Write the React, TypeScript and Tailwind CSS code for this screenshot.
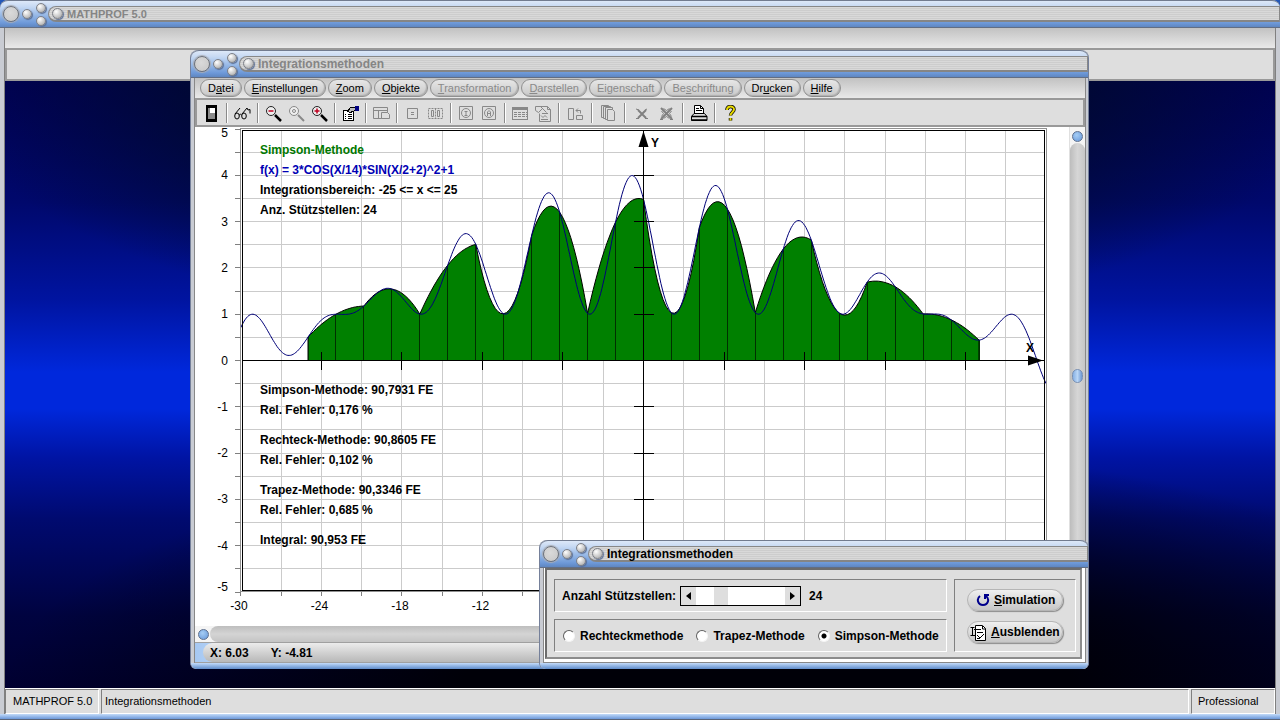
import React from 'react';

const f = (x: number) => 3 * Math.cos(x / 14) * Math.sin(x / 2 + 2) ** 2 + 1;

// plot coordinates -> svg coordinates
const px = (x: number) => 448.5 + x * 13.42;
const py = (y: number) => 233.5 - y * 46.3;

const FROM = -25;
const TO = 25;
const STEPS = 24;

const range = (from: number, to: number, step: number) => {
    const values: number[] = [];
    for (let v = from; v <= to + step / 100; v += step) values.push(v);
    return values;
};

const toPath = (points: number[][]) =>
    points.map(([x, y], i) => `${i ? 'L' : 'M'}${px(x).toFixed(1)} ${py(y).toFixed(1)}`).join('');

const simpsonPoints = () => {
    const h = (TO - FROM) / STEPS;
    const points: number[][] = [];
    for (let k = 0; k < STEPS; k += 2) {
        const x0 = FROM + k * h;
        const [a, b, c] = [f(x0), f(x0 + h), f(x0 + 2 * h)];
        for (let i = 0; i <= 20; i++) {
            const t = i / 10;
            const y = (a * (t - 1) * (t - 2)) / 2 - b * t * (t - 2) + (c * t * (t - 1)) / 2;
            points.push([x0 + t * h, y]);
        }
    }
    return points;
};

const curve = toPath(range(-30, 30, 0.1).map((x) => [x, f(x)]));
const area = toPath([[FROM, 0], ...simpsonPoints(), [TO, 0]]) + 'Z';
const nodes = range(FROM, TO, (TO - FROM) / STEPS);

const notes = [
    { y: 27, text: 'Simpson-Methode', color: '#007800' },
    { y: 47, text: 'f(x) = 3*COS(X/14)*SIN(X/2+2)^2+1', color: '#0000b4' },
    { y: 67, text: 'Integrationsbereich: -25 <= x <= 25', color: '#000' },
    { y: 87, text: 'Anz. Stützstellen: 24', color: '#000' },
    { y: 267, text: 'Simpson-Methode: 90,7931 FE', color: '#000' },
    { y: 287, text: 'Rel. Fehler: 0,176 %', color: '#000' },
    { y: 317, text: 'Rechteck-Methode: 90,8605 FE', color: '#000' },
    { y: 337, text: 'Rel. Fehler: 0,102 %', color: '#000' },
    { y: 367, text: 'Trapez-Methode: 90,3346 FE', color: '#000' },
    { y: 387, text: 'Rel. Fehler: 0,685 %', color: '#000' },
    { y: 417, text: 'Integral: 90,953 FE', color: '#000' },
];

const Chart: React.FC = () => (
    <svg viewBox="0 0 874 499" preserveAspectRatio="xMinYMin meet" className="block h-full w-full bg-white">
        <g stroke="#cbcbcb" shapeRendering="crispEdges">
            {range(-27, 27, 3).map((x) => (
                <path key={x} d={`M${px(x)} 4V463`} />
            ))}
            {range(-4.5, 4.5, 0.5).map((y) => (
                <path key={y} d={`M48 ${py(y)}H849`} />
            ))}
        </g>

        <path d={area} fill="#008000" stroke="#000" />
        <g stroke="#003000" shapeRendering="crispEdges">
            {nodes.map((x) => (
                <path key={x} d={`M${px(x)} ${py(f(x))}V${py(0)}`} />
            ))}
        </g>
        <path d={curve} fill="none" stroke="#000078" />

        {/* Axes */}
        <g stroke="#000" shapeRendering="crispEdges">
            <path d={`M48 ${py(0)}H849`} />
            <path d="M448.5 4V463" />
            {range(-24, 24, 6).map((x) => (
                <path key={x} d={`M${px(x)} 225v18`} />
            ))}
            {range(-4, 4, 1).map((y) => (
                <path key={y} d={`M439 ${py(y)}h20`} />
            ))}
        </g>
        <path d="M448.5 4l-5 16h10zM848 233.5l-15-5v10z" />

        {/* Frame and scale */}
        <g fill="none" shapeRendering="crispEdges">
            <rect x="45.5" y="1.5" width="806" height="463" stroke="#909090" />
            <rect x="47.5" y="3.5" width="802" height="460" stroke="#000" />
            {range(-5, 5, 0.5).map((y) => (
                <path key={y} d={`M40 ${py(y)}h6`} stroke="#808080" />
            ))}
            {range(-30, 30, 3).map((x) => (
                <path key={x} d={`M${px(x)} 465v4`} stroke="#808080" />
            ))}
        </g>
        <g className="text-[12px]" textAnchor="end">
            {range(-5, 5, 1).map((y) => (
                <text key={y} x="33" y={y === 5 ? 10 : y === -5 ? 464 : py(y) + 4}>{y}</text>
            ))}
        </g>
        <g className="text-[12px]" textAnchor="middle">
            {range(-30, -12, 6).map((x) => (
                <text key={x} x={px(x) - 2} y="483">{x}</text>
            ))}
        </g>

        <g className="text-[12px] font-bold">
            {notes.map((note) => (
                <text key={note.y} x="65" y={note.y} fill={note.color}>{note.text}</text>
            ))}
            <text x="456" y="20">Y</text>
            <text x="831" y="225">X</text>
        </g>
    </svg>
);

const knob =
    'block rounded-full border border-[#7d8088] bg-[radial-gradient(circle_at_35%_30%,#ffffff,#d4d4d4_45%,#a2a2a2)] shadow-[1px_1px_1px_#5a6f96]';

interface TitleBarProps {
    title: string;
    className: string;
}

const TitleBar: React.FC<TitleBarProps> = ({ title, className }) => (
    <div className="flex h-7 shrink-0 items-center rounded-t-lg border-t border-[#727c90] border-b border-b-[#626e84] bg-[linear-gradient(#dde8f8,#c6d9f3_22%,#9dbde8_50%,#6c98d8_85%,#5f86c0)] pl-[3px]">
        <button aria-label="Menü" className="block size-4 rounded-full border border-[#6e7178] bg-[radial-gradient(circle_at_45%_40%,#dadada,#c6c6c6)] shadow-[0_0_1px_1px_#a9adb5]" />
        <button aria-label="Minimieren" className={`ml-[3px] size-[10px] ${knob}`} />
        <div className="ml-1 flex flex-col gap-[3px]">
            <button aria-label="Maximieren" className={`size-[10px] ${knob}`} />
            <button aria-label="Wiederherstellen" className={`size-[10px] ${knob}`} />
        </div>
        <div className="ml-[2px] flex h-4 flex-1 items-center rounded-l-full rounded-r-sm border border-[#888] border-b-2 border-b-[#858585] bg-[repeating-linear-gradient(#d9d9d9_0px,#d9d9d9_1px,#cdcdcd_1px,#cdcdcd_2px)]">
            <button aria-label="Schließen" className={`ml-[3px] size-[11px] ${knob}`} />
            <span className={`ml-1 leading-[14px] font-bold ${className}`}>{title}</span>
        </div>
    </div>
);

interface MenuItem {
    label: string;
    key: number;
    disabled?: boolean;
}

const menu: MenuItem[] = [
    { label: 'Datei', key: 1 },
    { label: 'Einstellungen', key: 0 },
    { label: 'Zoom', key: 0 },
    { label: 'Objekte', key: 0 },
    { label: 'Transformation', key: 0, disabled: true },
    { label: 'Darstellen', key: 0, disabled: true },
    { label: 'Eigenschaft', key: 2, disabled: true },
    { label: 'Beschriftung', key: 2, disabled: true },
    { label: 'Drucken', key: 2 },
    { label: 'Hilfe', key: 0 },
];

const MenuBar: React.FC = () => (
    <nav className="flex h-5 shrink-0 items-center gap-[2px] bg-linear-to-b from-[#c2c2c2] to-[#e9e9e9] pl-[5px]">
        {menu.map(({ label, key, disabled }) => (
            <button
                key={label}
                disabled={disabled}
                className="h-[18px] rounded-full border border-[#909090] bg-linear-to-b from-[#e6e6e6] to-[#c9c9c9] px-[7px] text-[11px] leading-4 text-black shadow-[inset_-1px_-1px_1px_#b0b0b0] disabled:text-[#8a8a8a]"
            >
                {label.slice(0, key)}
                <u>{label[key]}</u>
                {label.slice(key + 1)}
            </button>
        ))}
    </nav>
);

interface Tool {
    name: string;
    icon: React.ReactNode;
}

const lens = <circle cx="6" cy="6" r="4.5" fill="#eee" />;

const toolGroups: { width: string; tools: Tool[] }[] = [
    {
        width: 'w-[23px]',
        tools: [
            {
                name: 'Beenden',
                icon: (
                    <g stroke="none">
                        <path d="M3 0h11v17H3z" fill="#000" />
                        <path d="M5 3h7v11H5z" fill="#8a8a8a" />
                        <path d="M7 3h5v5H7z" fill="#fff" />
                    </g>
                ),
            },
        ],
    },
    {
        width: 'w-[23px]',
        tools: [
            {
                name: 'Ansicht',
                icon: (
                    <g stroke="#000">
                        <ellipse cx="3" cy="11" rx="2.3" ry="3" />
                        <ellipse cx="10" cy="11" rx="2.3" ry="3" />
                        <path d="M1 9L6 3M5.2 10q1.300-1.500 2.500 0M8 9l5-6M13 3l1 2 2-.5v4" />
                    </g>
                ),
            },
        ],
    },
    {
        width: 'w-[23px]',
        tools: [
            {
                name: 'Verkleinern',
                icon: (
                    <g stroke="#222">
                        {lens}
                        <path d="M10 10l6 6" strokeWidth="2.500" stroke="#000" />
                        <path d="M3.500 6h5" stroke="#c00020" strokeWidth="1.500" />
                    </g>
                ),
            },
            {
                name: 'Originalgröße',
                icon: (
                    <g stroke="#888">
                        {lens}
                        <circle cx="6" cy="6" r="1.500" />
                        <path d="M10 10l6 6" strokeWidth="2" />
                    </g>
                ),
            },
            {
                name: 'Vergrößern',
                icon: (
                    <g stroke="#222">
                        {lens}
                        <path d="M10 10l6 6" strokeWidth="2.500" stroke="#000" />
                        <path d="M3.500 6h5M6 3.500v5" stroke="#c00020" strokeWidth="1.500" />
                    </g>
                ),
            },
        ],
    },
    {
        width: 'w-[23px]',
        tools: [
            {
                name: 'Eigenschaften',
                icon: (
                    <g stroke="#000" shapeRendering="crispEdges">
                        <path d="M1.500 5.500h10v10h-10z" fill="#fff" />
                        <path d="M3 9.500h1M6 9.500h4M3 11.500h1M6 11.500h4M3 13.500h1M6 13.500h4" />
                        <path d="M5.500 6.500l3-4h5v3l-3 1-2 1z" fill="#bbb" />
                        <path d="M13.500 1.500h3v4h-3z" fill="#000080" stroke="#000080" />
                    </g>
                ),
            },
        ],
    },
    {
        width: 'w-[23px]',
        tools: [
            {
                name: 'Fenster',
                icon: (
                    <g stroke="#888">
                        <path d="M.5 2.500h14v11H.5zM.5 5.500h14M5.500 5.500v8" />
                        <path d="M8.500 7.500h6l2 2v4h-8z" fill="#dedede" />
                    </g>
                ),
            },
        ],
    },
    {
        width: 'w-[23px]',
        tools: [
            { name: 'Punkt', icon: <path d="M3.500 3.500h10v10h-10zM7 7.500h3M7 9.500h3" stroke="#888" /> },
            {
                name: 'Punkte',
                icon: (
                    <g stroke="#888">
                        <path d="M1.500 3.500h14v10h-14zM8.500 3.500v10" strokeDasharray="2 1" />
                        <path d="M4.500 5.500h2v6h-2zM10.500 5.500h2v6h-2z" />
                    </g>
                ),
            },
        ],
    },
    {
        width: 'w-[23px]',
        tools: [
            {
                name: 'Titel',
                icon: (
                    <g stroke="#888">
                        <path d="M1.500 1.500h13v13h-13z" />
                        <circle cx="8" cy="8" r="4.500" />
                        <path d="M6.500 6.500h3M8 6v4.500M6.500 10.500h3" />
                    </g>
                ),
            },
            {
                name: 'Achsen',
                icon: (
                    <g stroke="#888">
                        <path d="M1.500 1.500h13v13h-13z" />
                        <circle cx="8" cy="8" r="4.500" />
                        <path d="M6.500 11V7l1.500-1.500L9.500 7v4M6.500 8.500h3" />
                    </g>
                ),
            },
        ],
    },
    {
        width: 'w-[23px]',
        tools: [
            {
                name: 'Tabelle',
                icon: (
                    <g stroke="#888" shapeRendering="crispEdges">
                        <path d="M.5 2.500h15v12H.5z" />
                        <path d="M1 4h15" strokeWidth="2" />
                        <path d="M2 7.500h13M2 9.500h13M2 11.500h13" strokeDasharray="3 1" />
                    </g>
                ),
            },
            {
                name: 'Export',
                icon: (
                    <g stroke="#888">
                        <path d="M4.500 1.500h8l3 3v12h-11v-8" />
                        <path d="M.5 1.500h5l6 6M.5 1.500v4l3 2 4-4M12.500 1.500v3h3M7 8.500h6M6 10.500l2 2 2-2 2 2M6 14.500h7" />
                    </g>
                ),
            },
        ],
    },
    {
        width: 'w-[25px]',
        tools: [
            {
                name: 'Tauschen',
                icon: (
                    <path d="M1.500 3.500h5v11h-5zM9.500 10.500h6v4h-6zM9 5.500h4.500v3M11 3.500l-2 2 2 2" stroke="#888" />
                ),
            },
        ],
    },
    {
        width: 'w-[25px]',
        tools: [
            {
                name: 'Kopieren',
                icon: (
                    <g stroke="#888" fill="#dedede">
                        <path d="M1.500 .5h7v12h-7z" />
                        <path d="M3.500 1.500h7v12h-7z" />
                        <path d="M5.500 2.500h7v12h-7z" />
                        <path d="M7.500 4.500h5l2 2v9h-7z" />
                    </g>
                ),
            },
        ],
    },
    {
        width: 'w-[25px]',
        tools: [
            {
                name: 'Löschen',
                icon: (
                    <g stroke="#808080">
                        <path d="M5 5l8 8M13 5l-8 8" strokeWidth="2" />
                        <path d="M3 4l3 1M14 4l-2 1M3 13.500h3M12 13.500h3" />
                    </g>
                ),
            },
            {
                name: 'Alles löschen',
                icon: (
                    <g stroke="#808080">
                        <path d="M3 3l11 11M14 3L3 14" strokeWidth="2" />
                        <path d="M5.500 3.500l3 2 3-2M5.500 13.500l3-2 3 2M3.500 6l2 2.500-2 3M13.500 6l-2 2.500 2 3M2 14.500h3M12 14.500h3" />
                    </g>
                ),
            },
        ],
    },
    {
        width: 'w-[24px]',
        tools: [
            {
                name: 'Drucken',
                icon: (
                    <g stroke="#000">
                        <path d="M3.500 8.500v-8h6l3 3v5" fill="#fff" />
                        <path d="M5 3.500h3M5 5.500h6M9.500.5v3h3" />
                        <path d="M.5 11.500l2.500-3h10.500l2.500 3v4H.5z" fill="#dedede" />
                        <path d="M.5 11.500H16M.5 15H16" strokeWidth="1.500" />
                    </g>
                ),
            },
        ],
    },
    {
        width: 'w-[23px]',
        tools: [
            {
                name: 'Hilfe',
                icon: (
                    <g fill="none">
                        <path d="M5 5c0-4.500 7-4.500 7-.5 0 2.500-3.500 3-3.500 6M8.500 13v2.500" stroke="#000" strokeWidth="3.500" />
                        <path d="M5 5c0-4.500 7-4.500 7-.5 0 2.500-3.500 3-3.500 6M8.500 13v2.500" stroke="#e6d800" strokeWidth="2" />
                    </g>
                ),
            },
        ],
    },
];

const Toolbar: React.FC = () => (
    <div className="flex h-[29px] shrink-0 items-center border-2 border-[#999] bg-[#dedede] pt-px pl-[3px]">
        {toolGroups.map((group, index) => (
            <React.Fragment key={index}>
                {index > 0 && <span className="mx-[3px] h-5 w-[2px] border-l border-[#8a8a8a] border-r border-r-white" />}
                {group.tools.map((tool) => (
                    <button key={tool.name} aria-label={tool.name} className={`flex justify-center ${group.width}`}>
                        <svg viewBox="0 0 17 17" className="size-[17px]" fill="none">{tool.icon}</svg>
                    </button>
                ))}
            </React.Fragment>
        ))}
    </div>
);

const scrollDot =
    'rounded-full border border-[#5c6f8e] bg-[radial-gradient(circle_at_40%_35%,#a5cdf5,#6596d8)]';

const PlotWindow: React.FC = () => (
    <section className="absolute top-[50px] right-[191px] bottom-[51px] left-[190px] flex flex-col rounded-t-lg rounded-b-md border-x border-[#75809a] bg-[#c9ccd3]">
        <TitleBar title="Integrationsmethoden" className="text-[12px] text-[#858585]" />
        <div className="ml-[3px] mr-[2px] flex min-h-0 flex-1 flex-col border-l border-[#888] border-r">
            <MenuBar />
            <Toolbar />
            <div className="flex min-h-0 flex-1">
                <div className="min-w-0 flex-1">
                    <Chart />
                </div>
                <div className="flex w-4 shrink-0 flex-col items-center border-l border-[#e0e0e0] bg-[#f4f4f4]">
                    <button aria-label="Nach oben" className={`mt-1 size-[11px] shrink-0 ${scrollDot}`} />
                    <div className="mt-px flex w-full flex-1 justify-center rounded-t-full bg-linear-to-r from-[#bdbdbd] via-[#d6d6d6] to-[#c6c6c6]">
                        <div className="mt-[226px] h-[14px] w-[11px] rounded-md border border-[#7890b4] bg-linear-to-r from-[#86b0e4] via-[#b9d6f6] to-[#6c97d2]" />
                    </div>
                </div>
            </div>
            <div className="flex h-4 shrink-0 items-center bg-[#f4f4f4]">
                <button aria-label="Nach links" className={`ml-[3px] size-[11px] shrink-0 ${scrollDot}`} />
                <div className="ml-px h-full flex-1 rounded-l-full bg-linear-to-b from-[#bebebe] via-[#d4d4d4] to-[#c4c4c4]" />
            </div>
            <div className="flex h-[21px] shrink-0 border-y border-[#a0a0a0] bg-linear-to-r from-[#a6c8f2] to-[#dcebfc] to-10% pl-2">
                <div className="flex flex-1 items-center gap-[22px] rounded-l-full bg-linear-to-b from-[#ececec] to-[#b8b8b8] pl-[7px] text-[12px] font-bold">
                    <span>X: 6.03</span>
                    <span>Y: -4.81</span>
                </div>
            </div>
        </div>
        <div className="h-[6px] shrink-0 rounded-b-md bg-linear-to-b from-[#c3dbfa] to-[#5f8cca]" />
    </section>
);

const groupBox = 'border border-[#808080] border-r-white border-b-white';
const pillButton =
    'relative flex h-[22px] w-24 items-center rounded-full border border-[#b5b5b5] bg-linear-to-b from-[#f0f0f0] to-[#c6c6c6] font-bold shadow-[1px_1px_1px_#8c8c8c]';

const methods = ['Rechteckmethode', 'Trapez-Methode', 'Simpson-Methode'];

const SettingsDialog: React.FC = () => (
    <section className="absolute right-[191px] bottom-[51px] flex w-[550px] flex-col rounded-t-lg rounded-b-md border-x border-[#75809a] bg-[#c9ccd3] text-[12px]">
        <TitleBar title="Integrationsmethoden" className="text-[12px] text-black" />
        <div className="ml-[3px] mr-[2px] border border-[#888] border-t-0 bg-white pr-[3px] pb-[3px] pl-px">
            <div className="flex h-[91px] gap-[7px] border-2 border-[#6c6c6c] border-r-[#8c8c8c] border-b-[#8c8c8c] bg-[#dedede] pt-[9px] pr-1 pb-[5px] pl-[7px]">
                <div className="flex flex-1 flex-col gap-[7px]">
                    <div className={`flex flex-1 items-center pl-[7px] font-bold ${groupBox}`}>
                        <label htmlFor="count">Anzahl Stützstellen:</label>
                        <div className="ml-1 flex h-5 w-[121px] border border-black bg-white">
                            <button aria-label="Weniger" className="flex w-[15px] shrink-0 items-center justify-center bg-[#dedede]">
                                <svg viewBox="0 0 5 8" className="h-2 w-[5px]"><path d="M5 0v8L0 4z" /></svg>
                            </button>
                            <input
                                id="count"
                                type="range"
                                min={0}
                                max={100}
                                defaultValue={24}
                                className="m-0 h-[18px] min-w-0 flex-1 appearance-none bg-white [&::-webkit-slider-thumb]:h-[18px] [&::-webkit-slider-thumb]:w-[14px] [&::-webkit-slider-thumb]:appearance-none [&::-webkit-slider-thumb]:bg-[#dedede]"
                            />
                            <button aria-label="Mehr" className="flex w-[15px] shrink-0 items-center justify-center bg-[#dedede]">
                                <svg viewBox="0 0 5 8" className="h-2 w-[5px]"><path d="M0 0v8l5-4z" /></svg>
                            </button>
                        </div>
                        <output htmlFor="count" className="ml-2">24</output>
                    </div>
                    <div className={`flex flex-1 items-center gap-[13px] pl-2 font-bold whitespace-nowrap ${groupBox}`}>
                        {methods.map((method) => (
                            <label key={method} className="flex items-center gap-[5px]">
                                <input
                                    type="radio"
                                    name="method"
                                    defaultChecked={method === 'Simpson-Methode'}
                                    className="size-3 appearance-none rounded-full border border-[#606060] border-r-[#f4f4f4] border-b-[#f4f4f4] bg-white checked:bg-[radial-gradient(circle,#000_2px,#fff_3px)]"
                                />
                                {method}
                            </label>
                        ))}
                    </div>
                </div>
                <div className={`flex w-[122px] flex-col items-center gap-[10px] pt-[9px] ${groupBox}`}>
                    <button className={`${pillButton} gap-1 pl-[8px]`}>
                        <svg viewBox="0 0 14 14" className="size-[14px]" fill="none" stroke="#00008c" strokeWidth="2">
                            <path d="M4 3C0 6 2 12 7 12s7-6 3-9" />
                            <path d="M8 2h5M9 1v5" />
                        </svg>
                        <span><u>S</u>imulation</span>
                    </button>
                    <button className={`${pillButton} gap-1 pl-[2px]`}>
                        <svg viewBox="0 0 17 17" className="size-[17px]" fill="none" stroke="#000">
                            <path d="M5.500 1.500h7l3 3v12h-10z" fill="#fff" />
                            <path d="M.5 3.500h4M2.500 3.500v8M.5 11.500h5M4 5.500h7M7 8.500h6M12.500 2v3h3M7 11l3 3 4-4M7 14.500h3" />
                        </svg>
                        <span><u>A</u>usblenden</span>
                    </button>
                </div>
            </div>
        </div>
        <div className="h-[6px] shrink-0 rounded-b-md bg-linear-to-b from-[#c3dbfa] to-[#5f8cca]" />
    </section>
);

const statusCell = 'flex items-center border border-[#808080] border-r-white border-b-white';

const App: React.FC = () => (
    <div className='relative flex min-h-screen flex-col bg-[#2458b8] font-["Liberation_Sans",Arial,sans-serif]'>
        <main className="flex flex-1 flex-col rounded-t-lg bg-[#c9ccd3]">
            <TitleBar title="MATHPROF 5.0" className="text-[11px] text-[#858585]" />
            <div className="mx-1 flex flex-1 flex-col border-x border-[#808080]">
                <div className="h-5 bg-linear-to-b from-[#c2c2c2] to-[#e9e9e9]" />
                <div className="h-[33px] border-2 border-[#999] bg-[#dedede]" />
                <div className="flex-1 bg-[radial-gradient(ellipse_55%_42%_at_50%_0%,#000a28_50%,#000a2800),radial-gradient(ellipse_60%_40%_at_60%_100%,#000008_40%,#00000800),linear-gradient(#000058,#00086c_20%,#0014a0_36%,#0028dc_48%,#0028dc_54%,#0014a4_62%,#000a70_72%,#000340_88%,#000030)]" />
                <footer className="flex h-[26px] gap-[2px] border-t border-white bg-[#dedede] text-[11px]">
                    <div className={`w-[94px] pl-[7px] ${statusCell}`}>MATHPROF 5.0</div>
                    <div className={`flex-1 pl-[3px] ${statusCell}`}>Integrationsmethoden</div>
                    <div className={`w-[84px] pl-[6px] ${statusCell}`}>Professional</div>
                </footer>
            </div>
            <div className="h-[6px] border-b border-[#5a6478] bg-linear-to-b from-[#c3dbfa] to-[#6c98d8]" />
        </main>
        <PlotWindow />
        <SettingsDialog />
    </div>
);

export default App;
